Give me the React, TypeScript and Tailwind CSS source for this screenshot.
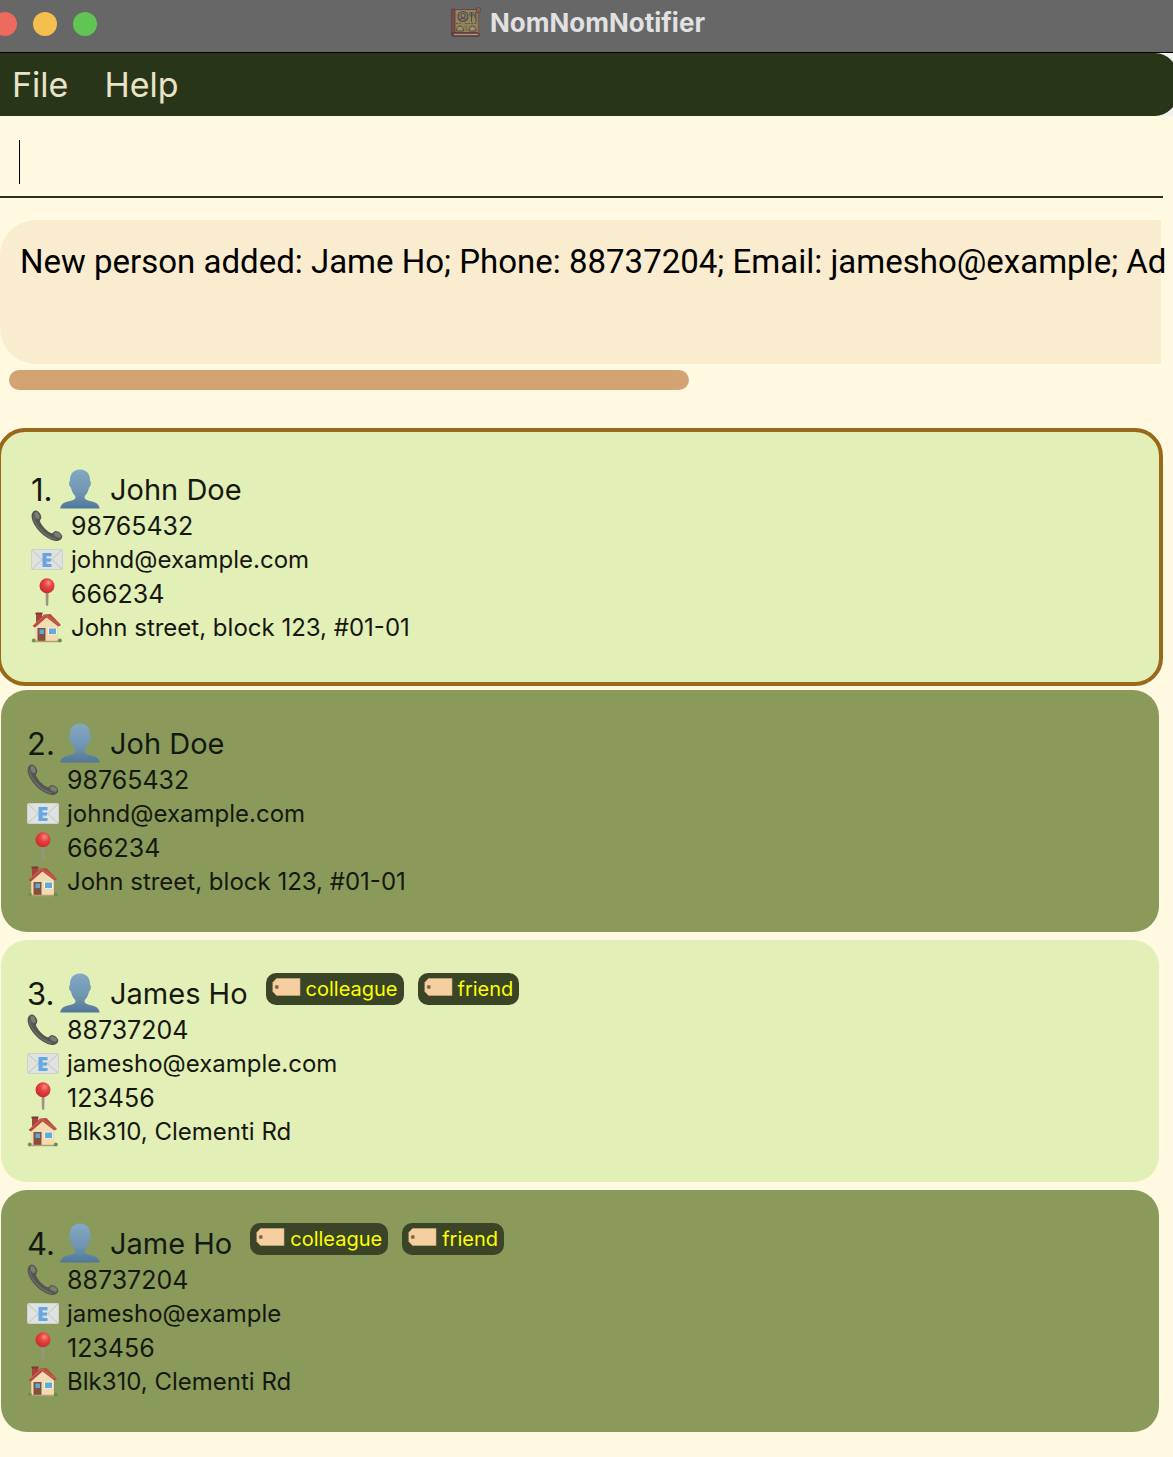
import React from "react";

type Person = {
  name: string;
  phone: string;
  email: string;
  postal: string;
  address: string;
  tags: string[];
};

const people: Person[] = [
  { name: "John Doe", phone: "98765432", email: "johnd@example.com", postal: "666234", address: "John street, block 123, #01-01", tags: [] },
  { name: "Joh Doe", phone: "98765432", email: "johnd@example.com", postal: "666234", address: "John street, block 123, #01-01", tags: [] },
  { name: "James Ho", phone: "88737204", email: "jamesho@example.com", postal: "123456", address: "Blk310, Clementi Rd", tags: ["colleague", "friend"] },
  { name: "Jame Ho", phone: "88737204", email: "jamesho@example", postal: "123456", address: "Blk310, Clementi Rd", tags: ["colleague", "friend"] },
];

function RecipeBookIcon() {
  return (
    <svg viewBox="0 0 32 32" className="size-8" aria-hidden="true">
      <path d="M2.500 2.500h26v24h-26z" fill="#95845a" stroke="#5a484b" />
      <path d="M1.500 2h3.500v26H1.500z" fill="#7a4a46" stroke="#594047" strokeWidth=".8" />
      <path d="M1.500 25.500h27.500v4H3.500Q1 29.500 1.500 27z" fill="#743f3c" stroke="#544249" />
      <path d="M4 27.500h24" stroke="#a8967f" strokeWidth="1.300" />
      <path d="M28.500 6v20" stroke="#7b5a4a" strokeWidth="1.500" />
      <circle cx="28.500" cy="3" r="2.500" fill="#87604f" stroke="#67484b" />
      <circle cx="13" cy="9.500" r="5" fill="#85795a" stroke="#45485a" strokeWidth="1.100" />
      <circle cx="13" cy="8.500" r="2" fill="#a88955" stroke="#41414a" strokeWidth=".9" />
      <path d="M10 12.500q3-3 6 0" stroke="#45485a" strokeWidth="1" fill="none" />
      <path d="M20 5v3.500q1.500 2 3 0V5M21.500 5v10M26 15.500V5q-2 3-1 6" stroke="#4b4d55" strokeWidth="1" fill="none" />
      <path d="M6 16.500h6M15 16.500h11" stroke="#5b5949" strokeWidth="1" strokeDasharray="2 1" />
      <path d="M6.500 24q0-5 3.500-5t3.500 5zM19 24q0-5 3.500-5T26 24z" fill="#aa8e58" stroke="#484a55" strokeWidth="1" />
      <path d="M14.500 19h3M14.500 21h3M14.500 23h3" stroke="#6a634f" strokeWidth=".8" />
    </svg>
  );
}

function PersonIcon() {
  return (
    <svg viewBox="0 0 40 40" className="h-10 w-10 shrink-0" aria-hidden="true">
      <defs>
        <linearGradient id="bust" x1="0" y1="0" x2="0" y2="1">
          <stop offset="0" stopColor="#84a9c5" />
          <stop offset=".6" stopColor="#6f94b0" />
          <stop offset="1" stopColor="#507799" />
        </linearGradient>
      </defs>
      <path
        d="M20 .5C13 .5 9.700 5.500 9.900 12C8.500 12.500 9 17.500 11 18.500C11.600 22 13 25 15.300 27V29.500C13 33 1.500 31 .3 39.500H39.700C38.500 31 27 33 24.700 29.500V27C27 25 28.400 22 29 18.500C31 17.500 31.500 12.500 30.100 12C30.300 5.500 27 .5 20 .5Z"
        fill="url(#bust)"
      />
    </svg>
  );
}

function PhoneIcon() {
  return (
    <svg viewBox="0 0 32 32" className="size-8" aria-hidden="true">
      <path
        d="M4.500 .5C1.500 1 .3 4 .7 7.500C2 17 14.500 29.500 24.500 31C28 31.500 31.300 29 31.300 26.500C31.300 24 27 20.700 24.500 21C22.500 21.200 22.300 23.500 20.500 23.200C16.500 22 10.500 15.500 9 11.500C8.500 10 10.300 9.500 10.300 7.300C10.300 4.500 7.500 .2 4.500 .5Z"
        fill="#555650"
      />
      <path d="M2.500 7C4 16 15 27 24 29" fill="none" stroke="#6b6d65" strokeWidth="1.500" strokeLinecap="round" />
      <ellipse cx="6" cy="5.500" rx="2.300" ry="3.700" transform="rotate(-20 6 5.500)" fill="#7b7d74" />
      <ellipse cx="26.500" cy="25" rx="3.700" ry="2.200" transform="rotate(28 26.500 25)" fill="#7b7d74" />
    </svg>
  );
}

function EmailIcon() {
  return (
    <svg viewBox="0 0 32 32" className="size-8" aria-hidden="true">
      <rect x=".5" y="5.500" width="31" height="20" rx="1" fill="#dfe2df" stroke="#cdd2cc" />
      <path d="M1 25L12 15M31 25L20 15M1 6l13 12q2 2 4 0L31 6" fill="none" stroke="#c0c5bf" strokeWidth="1" />
      <path d="M11.500 9h9v3.200h-5v2.300h4.500v3h-4.500v2.500h5V23h-9z" fill="#64a7e2" />
    </svg>
  );
}

function PinIcon() {
  return (
    <svg viewBox="0 0 32 32" className="size-8" aria-hidden="true">
      <defs>
        <radialGradient id="pinHead" cx=".6" cy=".32" r=".7">
          <stop offset="0" stopColor="#ff8b83" />
          <stop offset=".4" stopColor="#e84442" />
          <stop offset="1" stopColor="#c22c2b" />
        </radialGradient>
      </defs>
      <path d="M14.600 13h3l-.3 13.500q-1.200 3-2.400 0z" fill="#9a9284" />
      <circle cx="16" cy="7.700" r="7.500" fill="url(#pinHead)" />
    </svg>
  );
}

function HouseIcon() {
  return (
    <svg viewBox="0 0 32 32" className="size-8" aria-hidden="true">
      <path d="M5 1h6v9H5z" fill="#a5443a" />
      <path d="M4.500 .5h7v2h-7z" fill="#7f3932" />
      <path d="M4.500 14L10 6.500l9-3 8 10V29H4.500z" fill="#e8cfa2" />
      <path d="M4.500 14.500L15 4l11.500 10.500V29h-22z" fill="#f1dbb3" />
      <path d="M1.500 14L13 2.500 19.500 2 30 13l-2.500 1.500L15.500 5.500 4 15.500z" fill="#b54c3e" />
      <path d="M3 13L14.500 3 28 12.500" fill="none" stroke="#cf6a58" strokeWidth="1" />
      <path d="M6.500 16h8v13.500h-8z" fill="#84513c" />
      <path d="M8.500 17.500h4.500v4.500H8.500z" fill="#5aa9dd" />
      <path d="M17 15.500h9v7h-9z" fill="#fff0cf" />
      <path d="M18 16.500h7v5.500h-7z" fill="#5eace0" />
      <path d="M4.500 29.500h23" stroke="#b79c76" strokeWidth="1.500" />
      <circle cx="2.800" cy="28.500" r="2" fill="#779052" />
      <circle cx="28.800" cy="28.500" r="2" fill="#708a4b" />
    </svg>
  );
}

function TagIcon() {
  return (
    <svg viewBox="0 0 30 20" className="mb-1 h-5 w-[30px]" aria-hidden="true">
      <path d="M4.500 1.500H28V18.500H4.500L.8 14.500V5.500Z" fill="#f5cfa0" stroke="#cfab7e" strokeWidth=".6" />
      <circle cx="4.800" cy="10" r="2" fill="#7d6b50" />
    </svg>
  );
}

function Detail({ icon, numeric, children }: { icon: React.ReactNode; numeric?: boolean; children: React.ReactNode }) {
  return (
    <li className="flex h-[34px] items-center gap-2">
      {icon}
      <span className={numeric ? "text-[25px]" : "text-[24px]"}>{children}</span>
    </li>
  );
}

function PersonCard({ person, index }: { person: Person; index: number }) {
  const look =
    index === 0
      ? "-m-1 border-4 border-[#98681b] bg-[#e2efb7] pl-[30px] py-[37px] rounded-[28px]"
      : index % 2 === 1
        ? "bg-[#8a9a5b] pl-[26px] py-[33px] rounded-[26px]"
        : "bg-[#e2efb7] pl-[26px] py-[33px] rounded-[26px]";
  return (
    <li className={`${look} text-[#16180f]`}>
      <div className="flex h-10 items-center">
        <h2 className="flex items-center text-[29px] leading-10">
          <span className={index === 0 ? "w-[29px] pt-0.5 text-[31px]" : "w-[33px] pt-0.5 text-[31px]"}>{index + 1}.</span>
          <PersonIcon />
          <span className="ml-2.5 pt-0.5">{person.name}</span>
        </h2>
        <ul className="mb-2 ml-[18px] flex gap-3.5">
          {person.tags.map((tag) => (
            <li key={tag} className="flex h-8 items-center gap-1 rounded-[10px] bg-[#3a4527] px-1.5 text-[20px] leading-8 text-[#ffff00]">
              <TagIcon />
              {tag}
            </li>
          ))}
        </ul>
      </div>
      <ul className="leading-[34px]">
        <Detail icon={<PhoneIcon />} numeric>{person.phone}</Detail>
        <Detail icon={<EmailIcon />}>{person.email}</Detail>
        <Detail icon={<PinIcon />} numeric>{person.postal}</Detail>
        <Detail icon={<HouseIcon />}>{person.address}</Detail>
      </ul>
    </li>
  );
}

export default function App() {
  return (
    <div className="min-h-screen overflow-hidden bg-[#fef9e0] font-['Inter',sans-serif]">
      <header className="grid h-[53px] grid-cols-[1fr_auto_1fr] items-center border-b border-black bg-[#676767] pr-[18px] pb-1">
        <div className="-ml-[7px] flex gap-4">
          <button aria-label="Close" className="size-6 rounded-full bg-[#ed6a5e]" />
          <button aria-label="Minimize" className="size-6 rounded-full bg-[#f5bf4f]" />
          <button aria-label="Zoom" className="size-6 rounded-full bg-[#61c554]" />
        </div>
        <h1 className="flex items-center gap-2 pb-0.5 text-[26px] leading-8 font-bold text-[#e1e1e1]">
          <RecipeBookIcon />
          NomNomNotifier
        </h1>
      </header>

      <div className="bg-[#f1f1ee]">
        <nav className="-mr-1 flex h-[63px] items-center gap-9 rounded-r-[22px] bg-[#283518] pl-3 text-[34px] text-[#e9e4c8]">
          <button>File</button>
          <button>Help</button>
        </nav>
      </div>

      <main className="pb-6">
        <div className="mr-2.5 flex h-[82px] items-center border-b-2 border-[#283518] pt-3 pl-[19px]">
          <span className="h-11 w-px bg-black" />
          <input aria-label="Command" className="h-11 flex-1 bg-transparent text-[34px] caret-transparent outline-none" />
        </div>

        <section aria-label="Result" className="mt-[22px] mr-3">
          <output className="block h-36 rounded-l-[36px] bg-[#faeccf] pt-[21px] pl-5 font-['Roboto',sans-serif] text-[33px] leading-[42px] whitespace-nowrap text-black">
            New person added: Jame Ho; Phone: 88737204; Email: jamesho@example; Ad
          </output>
          <div className="mt-1.5 ml-[9px] h-5">
            <div className="h-5 w-[59%] rounded-full bg-[#d4a373]" />
          </div>
        </section>

        <ul className="mt-[42px] mr-3.5 ml-px flex flex-col gap-2">
          {people.map((person, i) => (
            <PersonCard key={person.name} person={person} index={i} />
          ))}
        </ul>
      </main>
    </div>
  );
}
